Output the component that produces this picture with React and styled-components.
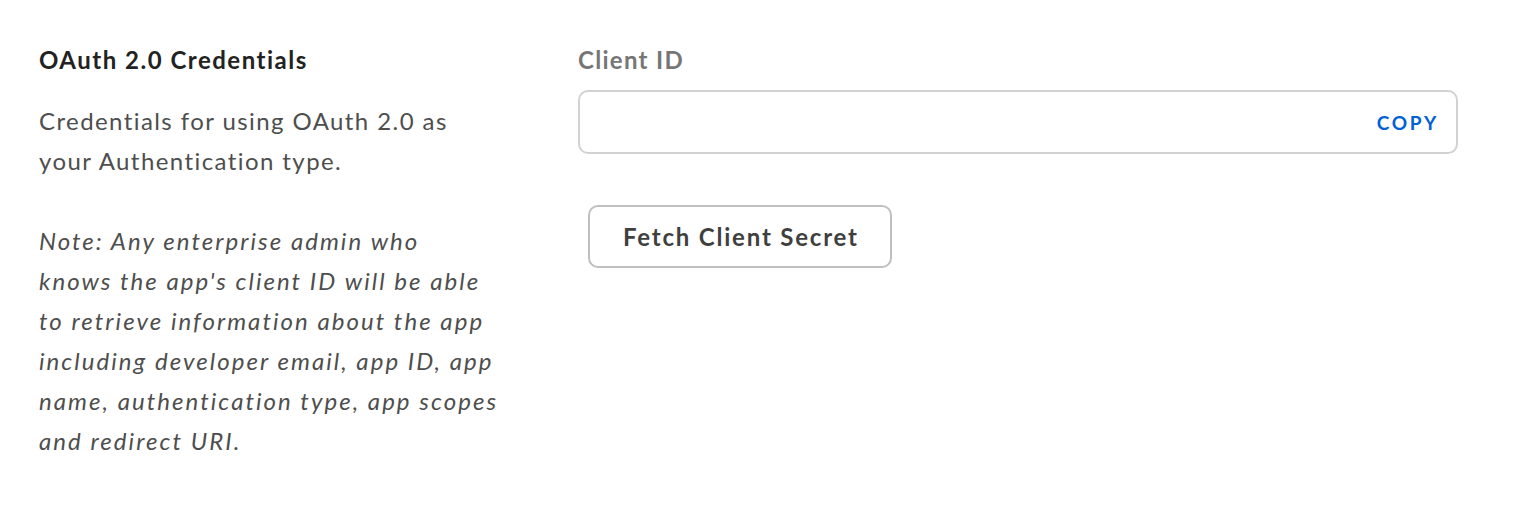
import React from "react";
import styled, { createGlobalStyle } from "styled-components";

const Global = createGlobalStyle`
  html, body { margin: 0; padding: 0; background: #fff; }
  body { font-family: Lato, "Noto Sans", sans-serif; -webkit-font-smoothing: antialiased; }
  * { box-sizing: border-box; }
`;

const Page = styled.div`
  width: 1530px;
  height: 528px;
  padding: 45px 0 0 39px;
  display: grid;
  grid-template-columns: 460px 880px;
  column-gap: 79px;
  align-items: start;
`;

const Column = styled.div`
  display: flex;
  flex-direction: column;
`;

const Title = styled.h3`
  margin: 0;
  font-size: 24px;
  line-height: 30px;
  font-weight: 700;
  letter-spacing: 1.5px;
  color: #222;
`;

const Text = styled.p`
  margin: ${(p) => p.$top || 0}px 0 0;
  font-size: 24px;
  line-height: 40px;
  color: #4e4e4e;
  font-style: ${(p) => (p.$italic ? "italic" : "normal")};
  letter-spacing: ${(p) => (p.$italic ? "2.05px" : "1.42px")};
  white-space: nowrap;
`;

const Label = styled.label`
  font-size: 24px;
  line-height: 30px;
  font-weight: 700;
  letter-spacing: 1.3px;
  color: #767676;
`;

const Field = styled.div`
  margin-top: 15px;
  height: 64px;
  border: 2px solid #d2d2d2;
  border-radius: 10px;
  display: flex;
  align-items: center;
  padding: 0 17px 0 20px;
  background: #fff;
`;

const Value = styled.div`
  flex: 1;
  font-size: 22px;
  color: #222;
`;

const CopyButton = styled.button`
  border: none;
  background: none;
  padding: 0;
  font-family: inherit;
  font-weight: 700;
  font-size: 19px;
  letter-spacing: 2.7px;
  color: #0061d5;
  cursor: pointer;
`;

const Button = styled.button`
  margin: 51px 0 0 10px;
  align-self: flex-start;
  height: 63px;
  padding: 0 31px 0 33px;
  border: 2px solid #bfbfbf;
  border-radius: 10px;
  background: #fff;
  font-family: inherit;
  font-size: 24px;
  font-weight: 700;
  letter-spacing: 1.8px;
  color: #3f3f3f;
  cursor: pointer;
`;

export default function App() {
  return (
    <>
      <Global />
      <Page>
        <Column>
          <Title>OAuth 2.0 Credentials</Title>
          <Text $top={26}>
            Credentials for using OAuth 2.0 as
            <br />
            your Authentication type.
          </Text>
          <Text $top={40} $italic>
            Note: Any enterprise admin who
            <br />
            knows the app's client ID will be able
            <br />
            to retrieve information about the app
            <br />
            including developer email, app ID, app
            <br />
            name, authentication type, app scopes
            <br />
            and redirect URI.
          </Text>
        </Column>
        <Column>
          <Label>Client ID</Label>
          <Field>
            <Value />
            <CopyButton>COPY</CopyButton>
          </Field>
          <Button>Fetch Client Secret</Button>
        </Column>
      </Page>
    </>
  );
}
